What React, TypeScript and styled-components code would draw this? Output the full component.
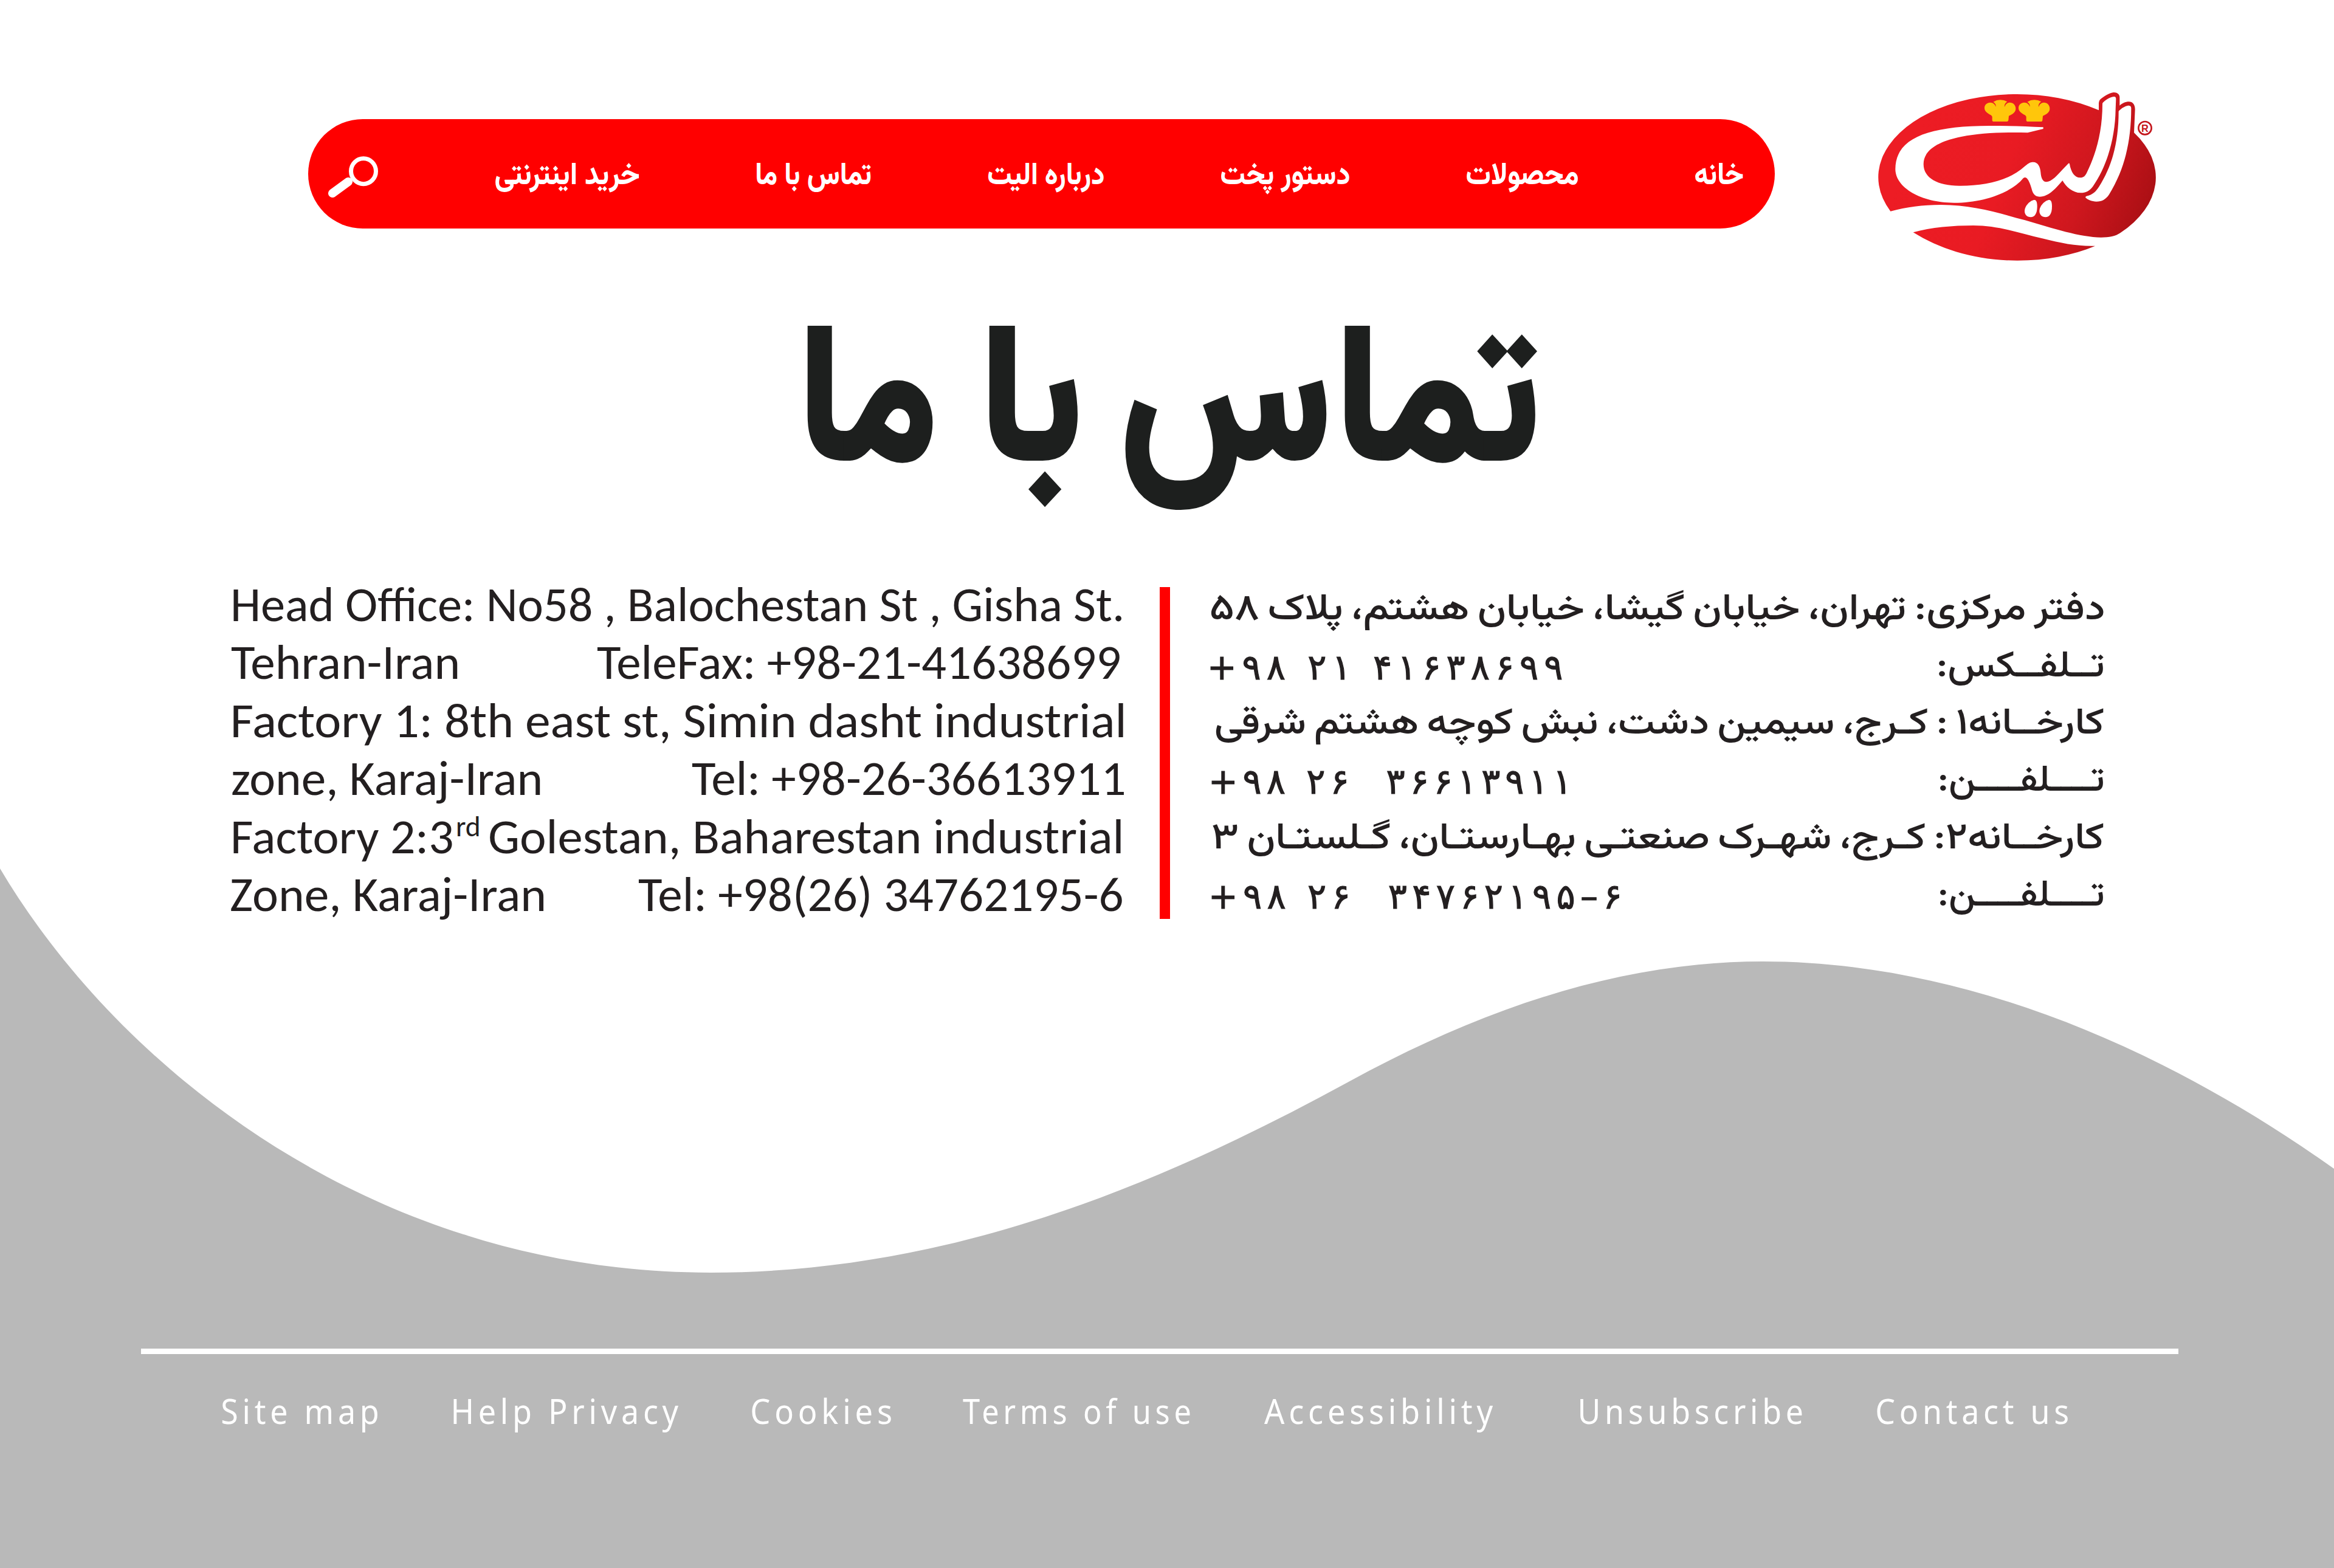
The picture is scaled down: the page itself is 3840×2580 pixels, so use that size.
import React, { useLayoutEffect, useRef, useState } from "react";
import styled, { createGlobalStyle } from "styled-components";

const PERSIAN = `Vazirmatn, "Noto Sans Arabic", "DejaVu Sans", sans-serif`;
const LATIN = `Carlito, Calibri, Lato, sans-serif`;

const GlobalStyle = createGlobalStyle`
  * { box-sizing: border-box; }
  body { margin: 0; background: #fff; }
`;

const Page = styled.div`
  position: relative;
  display: flex;
  flex-direction: column;
  width: 3840px;
  height: 2580px;
  overflow: hidden;
  isolation: isolate;
`;

const WaveBackdrop = styled.svg`
  position: absolute;
  inset: 0;
  z-index: -1;
`;

const Header = styled.header`
  display: flex;
  align-items: flex-start;
  gap: 140px;
  height: 450px;
  padding-left: 507px;
`;

const Nav = styled.nav`
  display: flex;
  align-items: center;
  justify-content: space-between;
  width: 2413px;
  height: 180px;
  margin-top: 196px;
  padding: 10px 52px 0 33px;
  border-radius: 90px;
  background: #ff0000;
`;

const NavItem = styled.a`
  display: block;
  height: 80px;
  color: #fff;
  font: 800 51px/80px ${PERSIAN};
`;

const LogoMark = styled.svg`
  display: block;
  margin-top: 130px;
`;

const Title = styled.h1`
  display: flex;
  height: 300px;
  margin: 79px 0 0;
  padding-left: 1328px;
  color: #1d1f1e;
  font: 900 323px/300px ${PERSIAN};
`;

const TitleWord = styled.span<{ $gap: number }>`
  display: block;
  margin-left: ${(p) => p.$gap}px;
`;

const Contact = styled.section`
  display: flex;
  align-items: flex-start;
  height: 600px;
  margin-top: 123.5px;
  padding-left: 380px;
  color: #231f20;
`;

const EnglishColumn = styled.div`
  width: 1470px;
  margin-top: -5.5px;
  font: 400 80px/95.4px ${LATIN};
`;

const PersianColumn = styled.div`
  width: 1469px;
  margin-top: 4px;
  font: 500 60px/94.3px ${PERSIAN};
  word-spacing: -4px;
`;

const Row = styled.div<{ $rtl?: boolean; $inset?: number; $end?: number }>`
  display: flex;
  flex-direction: ${(p) => (p.$rtl ? "row-reverse" : "row")};
  justify-content: space-between;
  height: 1lh;
  padding: 0 ${(p) => p.$end || 0}px 0 ${(p) => p.$inset || 0}px;
`;

const Ordinal = styled.sup`
  display: block;
  height: 1lh;
  margin: -28px 0 0 9px;
  font-size: 47px;
  line-height: 119px;
`;

const Cluster = styled.span`
  display: flex;
`;

const After = styled.span<{ $gap: number }>`
  display: block;
  margin-left: ${(p) => p.$gap}px;
`;

const Digits = styled.span<{ $track: number }>`
  display: block;
  direction: ltr;
  font-family: "DejaVu Sans", sans-serif;
  font-size: 58px;
  white-space: pre;
  word-spacing: 0;
  margin-left: -6px;
  -webkit-text-stroke: 1.2px currentColor;

  span {
    padding-right: ${(p) => p.$track}px;
  }
`;

const Divider = styled.div`
  width: 17px;
  height: 546px;
  margin: 13px 67px 0 58px;
  background: #ff0000;
`;

const Footer = styled.footer`
  margin: auto 256px 0 232px;
  height: 361px;
  border-top: 9px solid #fff;
`;

const FooterLinks = styled.nav`
  display: flex;
  gap: 121px;
  padding: 53px 0 0 133px;
`;

const FooterLink = styled.a<{ $shift?: number }>`
  display: block;
  height: 80px;
  margin-left: ${(p) => p.$shift || 0}px;
  color: #fff;
  font: 400 57px/80px "Noto Sans", "Open Sans", sans-serif;
  letter-spacing: 0.13em;
`;

const FitBox = styled.span`
  display: block;
  direction: ltr;
  text-align: left;
  white-space: pre;
`;

const FitInk = styled.span`
  display: inline-block;
  vertical-align: top;
  transform-origin: 0 50%;
`;

/* Stretches a run of text so that its ink fills the given width. */
function Fit({ width, rtl, children }: { width: number; rtl?: boolean; children: string }) {
  const ref = useRef<HTMLSpanElement>(null);
  const [transform, setTransform] = useState("none");
  useLayoutEffect(() => {
    const el = ref.current;
    const ctx = document.createElement("canvas").getContext("2d") as any;
    if (!el || !ctx) return;
    const cs = getComputedStyle(el);
    ctx.font = `${cs.fontWeight} ${cs.fontSize} ${cs.fontFamily}`;
    ctx.letterSpacing = cs.letterSpacing === "normal" ? "0px" : cs.letterSpacing;
    ctx.wordSpacing = cs.wordSpacing;
    ctx.direction = rtl ? "rtl" : "ltr";
    ctx.textAlign = "left";
    const m = ctx.measureText(children);
    const ink = m.actualBoundingBoxLeft + m.actualBoundingBoxRight;
    const scale = width / ink;
    setTransform(`translateX(${m.actualBoundingBoxLeft * scale}px) scaleX(${scale})`);
  }, [width, rtl, children]);
  return (
    <FitBox style={{ width }}>
      <FitInk ref={ref} dir={rtl ? "rtl" : "ltr"} style={{ transform }}>
        {children}
      </FitInk>
    </FitBox>
  );
}

function PhoneNumber({ track, children }: { track: number; children: string }) {
  return (
    <Digits $track={track}>
      {Array.from(children).map((c, i) => (
        <span key={i}>{c}</span>
      ))}
    </Digits>
  );
}

const navItems = [
  { label: "خرید اینترنتی", width: 237 },
  { label: "تماس با ما", width: 188 },
  { label: "درباره الیت", width: 190 },
  { label: "دستور پخت", width: 211 },
  { label: "محصولات", width: 183 },
  { label: "خانه", width: 79 },
];

const footerItems = [
  { label: "Site map", width: 256 },
  { label: "Help Privacy", width: 371, shift: 4 },
  { label: "Cookies", width: 229, shift: -1 },
  { label: "Terms of use", width: 374, shift: -3 },
  { label: "Accessibility", width: 377, shift: 1 },
  { label: "Unsubscribe", width: 365, shift: 22 },
  { label: "Contact us", width: 314, shift: 2 },
];

const Wave = () => (
  <WaveBackdrop width="3840" height="2580" viewBox="0 0 3840 2580">
    <path
      fill="#b9b9b9"
      d="M0 1429C190 1750 607 2094 1169 2094C1549 2094 1887 1961 2217 1781C2420 1670 2650 1582 2900 1582C3230 1582 3560 1724 3840 1923V2580H0Z"
    />
  </WaveBackdrop>
);

const SearchIcon = () => (
  <svg width="82" height="68" viewBox="0 0 82 68" fill="none" stroke="#fff">
    <ellipse cx="58" cy="24.7" rx="20.5" ry="21" strokeWidth="7" />
    <path d="M7 61L33 42" strokeWidth="14" strokeLinecap="round" />
  </svg>
);

const HAT =
  "M658 113Q675 103 693 103Q712 103 727 112C717 118 712 128 714 138C718 125 728 116 740 116C756 116 769 128 769 146C769 162 757 172 735 182L733 203Q733 210 724 210L662 210Q653 210 653 203L653 186Q651 181 646 178C630 168 615 160 615 143C615 127 628 116 643 116C658 116 668 126 670 137C673 127 667 118 658 113Z";
const DROP =
  "M862 597C872 597 875 612 875 630C875 665 862 682 843 682C825 682 813 670 813 652C813 625 843 597 862 597Z";

const Logo = () => (
  <LogoMark width="520" height="320" viewBox="0 0 1560 960">
    <defs>
      <linearGradient id="brand" gradientUnits="userSpaceOnUse" x1="250" y1="300" x2="1400" y2="740">
        <stop offset="0" stopColor="#ed1c24" />
        <stop offset="0.4" stopColor="#e91b23" />
        <stop offset="0.72" stopColor="#cf171e" />
        <stop offset="1" stopColor="#aa0f14" />
      </linearGradient>
    </defs>
    <g fill="url(#brand)">
      <path d="M151 653C230 632 310 621 400 621C560 621 690 663 815 697C950 737 1090 782 1190 782C1230 782 1262 776 1285 760A684 410 0 0 0 1353 265L1358 150C1358 125 1345 112 1328 112C1310 112 1295 120 1282 131L1282 90C1282 75 1270 66 1253 66C1232 66 1195 92 1185 102Q1179 109 1179 118L1179 154A684 410 0 0 0 151 653Z" />
      <path d="M263 757C350 732 460 723 560 723C690 723 800 765 900 787C1000 812 1070 826 1161 824C1050 870 920 896 777 896C570 896 400 842 263 757Z" />
    </g>
    <g fill="#fff">
      <path d="M905 238L905 246L828 265C720 262 600 265 500 285C400 305 314 345 314 420C314 490 385 526 490 527C620 528 740 500 815 430C835 412 845 410 855 410C880 410 890 435 892 460C894 490 903 508 920 508C945 508 975 475 1000 447L1029 417Q1033 413 1035 419C1042 460 1060 487 1087 487C1105 487 1112 478 1120 462C1165 370 1197 260 1197 122Q1197 118 1202 114C1220 98 1240 87 1255 87Q1264 88 1264 98L1262 150C1260 290 1220 430 1150 530C1132 553 1115 562 1090 562C1050 562 1017 532 1000 501C970 535 935 581 887 581C860 581 852 560 847 540C840 515 832 497 822 488Q814 483 806 490C750 560 610 611 465 611C300 611 175 535 175 445C175 290 340 232 640 231C730 231 820 234 905 238Z" />
      <path d="M1277 160Q1278 156 1284 152C1298 139 1315 131 1328 131Q1339 132 1339 145C1339 300 1310 440 1230 570C1213 595 1195 605 1167 605C1145 605 1125 597 1114 586Q1112 580 1118 578C1150 572 1165 555 1180 532C1245 430 1277 310 1277 160Z" />
      <path d={DROP} />
      <path d={DROP} transform="translate(73 0)" />
    </g>
    <g fill="#ffc60b">
      <path d={HAT} />
      <path d={HAT} transform="translate(168 0)" />
    </g>
    <circle cx="1407" cy="242" r="32" fill="none" stroke="#c4161c" strokeWidth="8" />
    <text x="1407" y="260" fill="#c4161c" fontFamily="Liberation Sans, sans-serif" fontSize="49" fontWeight="700" textAnchor="middle">
      R
    </text>
  </LogoMark>
);

export default function App() {
  return (
    <Page>
      <GlobalStyle />
      <Wave />
      <Header>
        <Nav>
          <SearchIcon />
          {navItems.map((item) => (
            <NavItem key={item.label}>
              <Fit width={item.width} rtl>{item.label}</Fit>
            </NavItem>
          ))}
        </Nav>
        <Logo />
      </Header>

      <Title>
        <TitleWord $gap={0}><Fit width={208} rtl>ما</Fit></TitleWord>
        <TitleWord $gap={91}><Fit width={149} rtl>با</Fit></TitleWord>
        <TitleWord $gap={73}><Fit width={681} rtl>تماس</Fit></TitleWord>
      </Title>

      <Contact>
        <EnglishColumn>
          <Row $inset={4}>
            <Fit width={1461}>Head Office: No58 , Balochestan St , Gisha St.</Fit>
          </Row>
          <Row $end={8}>
            <Fit width={373}>Tehran-Iran</Fit>
            <Fit width={860}>TeleFax: +98-21-41638699</Fit>
          </Row>
          <Row $inset={4}>
            <Fit width={1464}>Factory 1: 8th east st, Simin dasht industrial</Fit>
          </Row>
          <Row $inset={2} $end={1}>
            <Fit width={507}>zone, Karaj-Iran</Fit>
            <Fit width={711}>Tel: +98-26-36613911</Fit>
          </Row>
          <Row $inset={4} $end={3}>
            <Cluster>
              <Fit width={360}>Factory 2:3</Fit>
              <Ordinal><Fit width={35}>rd</Fit></Ordinal>
              <After $gap={18}>
                <Fit width={1038}>Golestan, Baharestan industrial</Fit>
              </After>
            </Cluster>
          </Row>
          <Row $end={4}>
            <Fit width={515}>Zone, Karaj-Iran</Fit>
            <Fit width={796}>Tel: +98(26) 34762195-6</Fit>
          </Row>
        </EnglishColumn>

        <Divider />

        <PersianColumn>
          <Row $rtl>
            <Fit width={1469} rtl>دفتر مرکزی: تهران، خیابان گیشا، خیابان هشتم، پلاک ۵۸</Fit>
          </Row>
          <Row $rtl>
            <Fit width={271} rtl>تــلفــکس:</Fit>
            <PhoneNumber track={9}>+۹۸ ۲۱ ۴۱۶۳۸۶۹۹</PhoneNumber>
          </Row>
          <Row $rtl>
            <Fit width={1461} rtl>کارخــانه۱ : کـرج، سیمین دشت، نبش کوچه هشتم شرقی</Fit>
          </Row>
          <Row $rtl $inset={2}>
            <Fit width={269} rtl>تــــلفــــن:</Fit>
            <PhoneNumber track={8}>+۹۸ ۲۶  ۳۶۶۱۳۹۱۱</PhoneNumber>
          </Row>
          <Row $rtl>
            <Fit width={1466} rtl>کارخــانه۲: کـرج، شهـرک صنعتـی بهـارستـان، گـلستـان ۳</Fit>
          </Row>
          <Row $rtl $inset={2}>
            <Fit width={269} rtl>تــــلفــــن:</Fit>
            <PhoneNumber track={8.4}>+۹۸ ۲۶  ۳۴۷۶۲۱۹۵–۶</PhoneNumber>
          </Row>
        </PersianColumn>
      </Contact>

      <Footer>
        <FooterLinks>
          {footerItems.map((item) => (
            <FooterLink key={item.label} $shift={item.shift}>
              <Fit width={item.width}>{item.label}</Fit>
            </FooterLink>
          ))}
        </FooterLinks>
      </Footer>
    </Page>
  );
}
